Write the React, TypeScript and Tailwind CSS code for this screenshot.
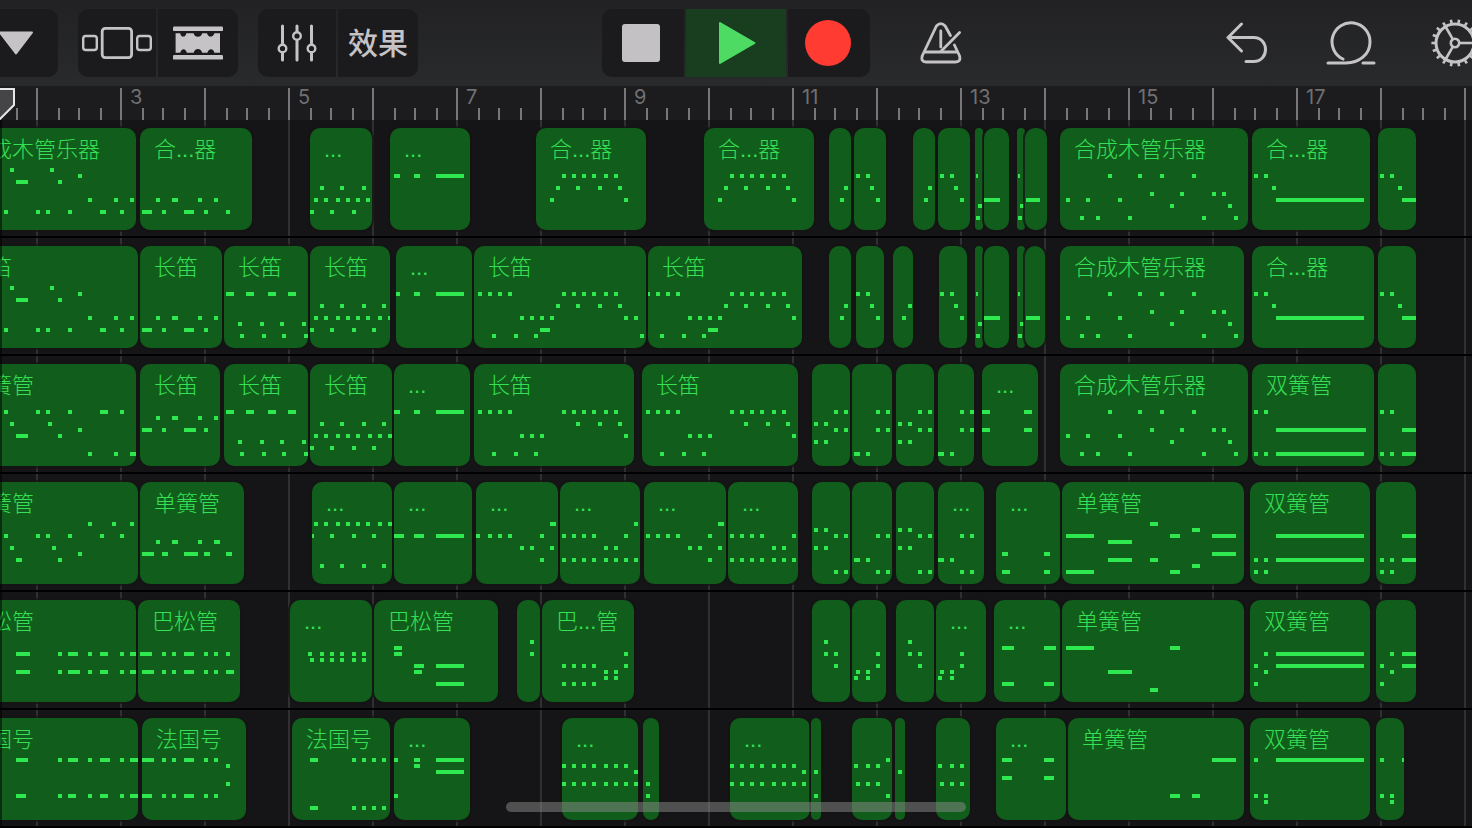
import React from "react";

type Clip = { start: number; end: number; label?: string; notes: string };

const clip = (start: number, end: number, notes: string, label?: string): Clip => ({ start, end, label, notes });

/* Notes are written as "level:x,x,..." groups; "x" may carry a width, as in 16x12. */
const OPENING = "0:10,50 1:78 2:16x12,58 5:88,114,130 7:4,36,46,68,100x6,120";
const SOLO =
  "1:1108,1138,1160,1192 4:1150,1180,1212,1222 5:1066,1086,1118 6:1170,1228 8:1080,1096,1128,1202,1234";
const BEATS = "1:226x8,246x8,268x8,288x8 6:238,260,280,302 8:240,262,282,304";

/* Bars beyond the end of the song keep their ticks but carry no number. */
const LAST_BAR = 18;

const lanes: { name: string; clips: Clip[] }[] = [
  {
    name: "合成木管乐器",
    clips: [
      clip(-46, 136, OPENING, "合成木管乐器"),
      clip(140, 252, "5:156,172x6,198,214 7:142x10,162,184x10,204,226", "合...器"),
      clip(310, 372, "3:320,340,362 5:314,324,336,346,356,366 7:310,330,352", "..."),
      clip(390, 470, "1:394x6,414x6,436x28", "..."),
      clip(536, 646, "1:562,572,582,592,604,614 3:556,576,598,618 5:550,624", "合...器"),
      clip(704, 814, "1:730,740,750,760,772,782 3:724,744,766,786 5:718,792", "合...器"),
      clip(829, 851, "3:844 5:840"),
      clip(854, 886, "1:856,866 3:870 5:876"),
      clip(913, 935, "3:928 5:924"),
      clip(938, 970, "1:940,950 3:954 5:960"),
      clip(975, 983, "1:976x2 6:978 8:976"),
      clip(984, 1009, "5:984x16"),
      clip(1017, 1025, "1:1018x2 6:1020 8:1018"),
      clip(1025, 1047, "5:1026x14"),
      clip(1060, 1248, SOLO, "合成木管乐器"),
      clip(1252, 1370, "1:1254,1264 3:1272 5:1276x88", "合...器"),
      clip(1378, 1416, "1:1380,1390 3:1398 5:1402x14"),
    ],
  },
  {
    name: "长笛",
    clips: [
      clip(-46, 138, OPENING, "长笛"),
      clip(140, 222, "5:156,172x6,198,214 7:142x10,162,184x10,204", "长笛"),
      clip(224, 308, BEATS, "长笛"),
      clip(310, 390, "3:320,340,362,382 5:314,324,336,346,356,366,378,388 7:310,330,352,372", "长笛"),
      clip(396, 472, "1:396,414x6,436x28", "..."),
      clip(
        474,
        646,
        "1:478,488,498,508,562,572,582,592,604,614 3:556,576,598,618 5:520,530,540,550,624,634 7:540x10 8:492,514,534,640",
        "长笛",
      ),
      clip(
        648,
        802,
        "1:648x2,656,666,676,730,740,750,760,772,782 3:724,744,766,786 5:688,698,708,718,792 7:708x10 8:660,682,702",
        "长笛",
      ),
      clip(829, 851, "3:844 5:840"),
      clip(856, 884, "1:856,866 3:870 5:876"),
      clip(893, 913, "3:908 5:902"),
      clip(939, 967, "1:940,950 3:954 5:960"),
      clip(975, 983, "1:976x2 6:978 8:976"),
      clip(984, 1009, "5:984x16"),
      clip(1017, 1025, "1:1018x2 6:1020 8:1018"),
      clip(1025, 1045, "5:1026x14"),
      clip(1060, 1244, SOLO, "合成木管乐器"),
      clip(1252, 1374, "1:1254,1264 3:1272 5:1276x88", "合...器"),
      clip(1378, 1416, "1:1380,1390 3:1398 5:1402x14"),
    ],
  },
  {
    name: "双簧管",
    clips: [
      clip(-46, 136, "1:4,36,46,68,100x8,120 3:10,48 4:78 5:16x12,58 8:88,114,130x6", "双簧管"),
      clip(140, 220, "2:156,172x6,198,214 4:142x10,162,184x12,204", "长笛"),
      clip(224, 308, BEATS, "长笛"),
      clip(310, 392, "3:320,340,362,382 5:314,324,336,346,356,368,378,388 7:310,330,352,372", "长笛"),
      clip(394, 470, "1:394x6,414x6,436x28", "..."),
      clip(
        474,
        634,
        "1:478,488,498,508,562,572,582,592,604,614 3:576,598,618 5:520,530,540,624 8:492,514,534",
        "长笛",
      ),
      clip(
        642,
        798,
        "1:646,656,666,676,730,740,750,760,772,782 3:744,766,786 5:688,698,708,792 8:660,682,702",
        "长笛",
      ),
      clip(812, 850, "1:834,844 3:814,824 4:834,844 6:814,824"),
      clip(852, 892, "1:876,886 4:876,886 8:854x6,866"),
      clip(896, 934, "1:918,928 3:898,908 4:918,928 6:898,908"),
      clip(938, 974, "1:960,970 4:960,970 8:938x6,950"),
      clip(982, 1038, "1:982x8,1024x8 4:982x8,1024x8", "..."),
      clip(1060, 1248, SOLO, "合成木管乐器"),
      clip(1252, 1374, "1:1254,1264 4:1276x90 8:1254,1264,1276x88", "双簧管"),
      clip(1378, 1416, "1:1380,1390 4:1402x14 8:1380,1390,1402x14"),
    ],
  },
  {
    name: "单簧管",
    clips: [
      clip(-46, 138, "0:88,112,130 2:4,36,46,68,100,120 4:10,52 5:78 6:16x6,58", "单簧管"),
      clip(140, 244, "3:156,172x6,198,214x6 5:142x12,162x6,184x14,204x6,226x6", "单簧管"),
      clip(312, 392, "0:314,324,336,346,356,366,378,388 2:312x2,330,352,372 7:320,340,362,382", "..."),
      clip(394, 472, "2:394x10,414x10,436x28", "..."),
      clip(476, 558, "0:550x6 2:476,488,498,508,540 4:520,530,550 6:540", "..."),
      clip(560, 640, "0:634 2:562,572,582,592,624 4:604,614 6:562,572,582,592,604,614,624,634", "..."),
      clip(644, 726, "0:718x6 2:646,656,666,676,708 4:688,698,718 6:708", "..."),
      clip(728, 798, "2:730,740,750,760,792 4:772,782 6:730,740,750,760,772,782,792", "..."),
      clip(812, 850, "1:814,824 2:834,844 4:814,824 8:834,844"),
      clip(852, 892, "2:876,886 6:854x6,866 8:876,886"),
      clip(896, 934, "1:898,908 2:918,928 4:898,908 8:918,928"),
      clip(938, 984, "2:960,970 6:938x6,950 8:960,970", "..."),
      clip(996, 1060, "5:1002x6,1044x6 8:1002x8,1044x6", "..."),
      clip(
        1062,
        1244,
        "0:1150x8 1:1192x8 2:1066x28,1170x10,1212x24 3:1108x24 5:1212x24 6:1108x24,1150x8 7:1192x8 8:1066x28,1170x10",
        "单簧管",
      ),
      clip(1250, 1370, "2:1276x88 6:1254,1264,1276x88 8:1254,1264", "双簧管"),
      clip(1376, 1416, "2:1402x14 6:1380,1390,1402x14 8:1380,1390"),
    ],
  },
  {
    name: "巴松管",
    clips: [
      clip(-46, 136, "2:16x14,58,68x10,88,100x8,120,130x6 5:16x14,58,68x12,88,100x8,120,130x6", "巴松管"),
      clip(138, 240, "2:140x12,162,172,184x10,204,214,226 5:142x12,162,172,184x10,204,214,226x8", "巴松管"),
      clip(290, 372, "2:308,320,330,340,352,362 3:310,320,330,340,352,362", "..."),
      clip(374, 498, "1:394x8 2:394x8 4:414x10,436x28 5:414x8 7:436x28", "巴松管"),
      clip(517, 540, "0:530 2:530"),
      clip(542, 634, "2:624 4:562,572,582,592,624 5:604,614 6:604,614 7:562,572,582,592", "巴...管"),
      clip(812, 850, "0:824 2:824,834 4:834"),
      clip(852, 886, "2:876 4:876 5:856,866 6:854,866"),
      clip(896, 934, "0:908 2:908,918 4:918"),
      clip(936, 986, "2:960 4:960 5:940,950 6:938,950", "..."),
      clip(994, 1060, "1:1002x12,1044x12 7:1002x12,1044x10", "..."),
      clip(1062, 1244, "1:1066x28,1170x10 5:1108x24 8:1150x8", "单簧管"),
      clip(1250, 1370, "2:1264,1276x88 4:1254,1276x88 5:1264 7:1254", "双簧管"),
      clip(1376, 1416, "2:1390,1402x14 4:1380,1402x14 5:1390 7:1380"),
    ],
  },
  {
    name: "法国号",
    clips: [
      clip(-46, 138, "0:16x12,58,68x10,88,100x10,120,130x8 6:16x10,58,68x8,88,100x8,120,130x8", "法国号"),
      clip(142, 246, "0:142x12,162,172,184x10,204,214 1:226 4:226 6:142x10,162,172,184x10,204,214", "法国号"),
      clip(292, 390, "0:310x8,352,362,372,382 8:310x8,352,362,372,382", "法国号"),
      clip(394, 470, "0:394,414x6,436x28 1:414x6 2:436x28 6:394", "..."),
      clip(562, 638, "1:562,572,582,592,604,614,624 2:634 4:562,572,582,592,604,614,624,634", "..."),
      clip(643, 659, "4:646 6:646"),
      clip(730, 810, "1:730,740,750,760,772,782,792 2:802 4:730,740,750,760,772,782,792,802", "..."),
      clip(811, 821, "2:814 6:814"),
      clip(852, 892, "0:886 1:854,866,876 4:856,866,876 6:886"),
      clip(895, 905, "2:898"),
      clip(936, 970, "1:938,950,960 4:940,950,960"),
      clip(996, 1066, "0:1002x10,1044x10 3:1002x10,1044x10", "..."),
      clip(1068, 1244, "0:1212x24 6:1170x10,1192x8", "单簧管"),
      clip(1250, 1370, "0:1254,1276x88 6:1254,1264 7:1264", "双簧管"),
      clip(1376, 1404, "0:1380,1402x2 6:1380,1390 7:1390"),
    ],
  },
];

function parseNotes(notes: string) {
  return notes.split(" ").flatMap((group) => {
    const [level, list] = group.split(":");
    return list.split(",").map((item) => {
      const [x, width] = item.split("x").map(Number);
      return { x, y: 40 + Number(level) * 6, width: width || 4 };
    });
  });
}

function Region({ start, end, label, notes }: Clip) {
  const width = end - start;
  return (
    <div
      className="absolute top-2 h-[102px] overflow-hidden rounded-[10px] bg-[#115d1c] shadow-[0_0_0_2px_rgba(20,20,22,0.75)]"
      style={{ left: start, width }}
    >
      <svg className="absolute inset-0 size-full" fill="#2fe850" shapeRendering="crispEdges" aria-hidden="true">
        {parseNotes(notes).map((note, i) => (
          <rect key={i} x={note.x - start} y={note.y} width={note.width} height={4} />
        ))}
      </svg>
      {label && (
        <span className="relative block whitespace-nowrap pl-[14px] text-[22px] leading-[44px] font-light text-[#35e055]">
          {label}
        </span>
      )}
    </div>
  );
}

function Ruler() {
  return (
    <div className="relative h-[34px] overflow-hidden bg-[#1c1c1e]">
      <div className="-ml-12 flex h-full">
        {Array.from({ length: 40 }, (_, i) => i + 1).map((bar) => (
          <div key={bar} className="relative flex w-[84px] shrink-0 items-end">
            <i className="h-8 w-[2px] bg-[#77777a]" />
            <i className="ml-5 h-3 w-[2px] bg-[#77777a]" />
            <i className="ml-[18px] h-3 w-[2px] bg-[#77777a]" />
            <i className="ml-5 h-3 w-[2px] bg-[#77777a]" />
            {bar % 2 === 1 && bar > 1 && bar <= LAST_BAR && (
              <span className="absolute top-0 left-[10px] font-['Inter','Liberation_Sans',sans-serif] text-[20px] leading-[22px] text-[#707073]">
                {bar}
              </span>
            )}
          </div>
        ))}
      </div>
      <svg className="absolute top-[2px] left-0" width="16" height="32" viewBox="0 0 16 32" aria-hidden="true">
        <path d="M-4 1H14V17L0 31H-4Z" fill="#454548" stroke="#e6e6e8" strokeWidth="2" />
      </svg>
    </div>
  );
}

const stroke = { fill: "none", stroke: "currentColor", strokeLinecap: "round", strokeLinejoin: "round" } as const;

function DropIcon() {
  return (
    <svg width="36" height="26" viewBox="0 0 36 26" fill="currentColor" stroke="currentColor" strokeWidth="2" strokeLinejoin="round">
      <path d="M2 2.5H34L18 23.5Z" />
    </svg>
  );
}

function BrowserIcon() {
  return (
    <svg width="70" height="32" viewBox="0 0 70 32" {...stroke}>
      <rect x="1.2" y="9" width="13.6" height="14" rx="2.6" strokeWidth="2.4" />
      <rect x="20.2" y="1.4" width="29.4" height="29.2" rx="3" strokeWidth="2.8" />
      <rect x="55.2" y="9" width="13.6" height="14" rx="2.6" strokeWidth="2.4" />
    </svg>
  );
}

function TracksIcon() {
  return (
    <svg width="50" height="34" viewBox="0 0 50 34" fill="currentColor">
      <rect y="0.5" width="50" height="4.6" rx="1.2" />
      <rect y="29" width="50" height="4.6" rx="1.2" />
      <path d="M2.6 7.2H7.2Q7.8 10.6 10.2 10.6Q12.6 10.6 13.4 7.2H20.6Q21.6 10.8 24.9 10.8Q28.2 10.8 29.2 7.2H34Q35 10.6 37.6 10.6Q40.2 10.6 41.4 7.2H47V26.8H41.4Q40.6 23.2 38 23.2Q35.4 23.2 34.4 26.8H29.2Q28.2 23 24.9 23Q21.6 23 20.6 26.8H13.8Q13 23.2 10.6 23.2Q8.2 23.2 7.2 26.8H2.6Z" />
    </svg>
  );
}

function MixerIcon() {
  return (
    <svg width="40" height="38" viewBox="0 0 40 38" {...stroke} strokeWidth="3">
      <path d="M5.5 2V19M5.5 29V36M20 2V7M20 17V36M34.5 2V19M34.5 29V36" />
      <circle cx="5.5" cy="24.5" r="3.8" strokeWidth="2.4" />
      <circle cx="20" cy="12" r="3.8" strokeWidth="2.4" />
      <circle cx="34.5" cy="24.5" r="3.8" strokeWidth="2.4" />
    </svg>
  );
}

function MetronomeIcon() {
  return (
    <svg width="42" height="42" viewBox="0 0 42 42" {...stroke} strokeWidth="2.8">
      <path d="M30.4 13.5L25.2 4Q20.8 -0.8 16.4 4L2.4 33.5Q0.4 39.8 6 40H35.6Q41.4 39.8 39.4 33.5L34.4 23" />
      <path d="M5 30H36.5M20.8 9V25" />
      <path d="M39.6 10.4L20.8 29.4" />
    </svg>
  );
}

function UndoIcon() {
  return (
    <svg width="42" height="42" viewBox="0 0 42 42" {...stroke} strokeWidth="3">
      <path d="M15.5 2L2 15.5L15.5 29M2 15.5H27.5C43.5 15.5 43.5 39.5 27.5 39.5H20" />
    </svg>
  );
}

function LoopIcon() {
  return (
    <svg width="50" height="44" viewBox="0 0 50 44" {...stroke} strokeWidth="3">
      <path d="M2 42H20C33 42 44 33.5 44 21A19 19 0 1 0 17 38" />
      <path d="M37 42H48" />
    </svg>
  );
}

function GearIcon() {
  const teeth = Array.from({ length: 18 }, (_, i) => i * 20);
  return (
    <svg width="50" height="50" viewBox="-25 -25 50 50" {...stroke} strokeLinecap="butt" strokeWidth="2.6">
      <circle r="19" strokeWidth="3" />
      <circle r="4.2" />
      {[0, 120, 240].map((angle) => (
        <path key={angle} d="M4.5 0H18.5" transform={`rotate(${angle})`} />
      ))}
      {teeth.map((angle) => (
        <path key={angle} d="M20 0H23.6" transform={`rotate(${angle})`} />
      ))}
    </svg>
  );
}

const segment = "flex h-full items-center justify-center bg-[#1b1b1d]";
const bare = "flex h-[68px] items-center justify-center";

function Toolbar() {
  return (
    <header className="grid h-[86px] grid-cols-[1fr_auto_1fr] items-center bg-linear-to-b from-[#222224] to-[#292a2c] text-[#c5c3c6]">
      <div className="flex h-[68px] gap-5">
        <button aria-label="乐器" className={`${segment} -ml-[26px] w-[84px] rounded-[10px]`}>
          <DropIcon />
        </button>
        <div className="flex gap-[2px] overflow-hidden rounded-[10px]">
          <button aria-label="浏览器" className={`${segment} w-[78px]`}>
            <BrowserIcon />
          </button>
          <button aria-label="轨道" className={`${segment} w-20`}>
            <TracksIcon />
          </button>
        </div>
        <div className="flex gap-[2px] overflow-hidden rounded-[10px]">
          <button aria-label="混音" className={`${segment} w-[78px]`}>
            <MixerIcon />
          </button>
          <button className={`${segment} w-20 text-[30px] font-medium`}>效果</button>
        </div>
      </div>

      <div className="flex h-[68px] gap-[2px] overflow-hidden rounded-[10px]">
        <button aria-label="停止" className={`${segment} w-[82px] pr-1`}>
          <span className="size-[38px] rounded-[3px] bg-[#c3c1c4]" />
        </button>
        <button aria-label="播放" className="flex h-full w-[100px] items-center justify-center bg-[#183d1f] pl-[2px]">
          <svg width="38" height="44" viewBox="0 0 38 44" fill="#4ddb64" stroke="#4ddb64" strokeWidth="2" strokeLinejoin="round">
            <path d="M2 2V42L36.5 22Z" />
          </svg>
        </button>
        <button aria-label="录音" className={`${segment} w-[82px] pr-[2px]`}>
          <span className="size-[46px] rounded-full bg-[#ff3b32]" />
        </button>
      </div>

      <div className="-mr-[35px] flex justify-between">
        <button aria-label="节拍器" className={`${bare} ml-[41px] w-[60px]`}>
          <MetronomeIcon />
        </button>
        <div className="flex">
          <button aria-label="撤销" className={`${bare} w-[104px]`}>
            <UndoIcon />
          </button>
          <button aria-label="循环" className={`${bare} w-[104px]`}>
            <LoopIcon />
          </button>
          <button aria-label="设置" className={`${bare} w-[104px]`}>
            <GearIcon />
          </button>
        </div>
      </div>
    </header>
  );
}

export default function App() {
  return (
    <div className="min-h-screen overflow-hidden bg-[#151517] font-['Liberation_Sans','Noto_Sans_CJK_SC',sans-serif]">
      <Toolbar />
      <Ruler />
      <main className="relative bg-[linear-gradient(to_right,#303033_2px,transparent_2px)] bg-size-[84px_100%] bg-position-[36px_0]">
        {lanes.map((lane) => (
          <section
            key={lane.name}
            aria-label={lane.name}
            className="relative h-[118px] overflow-hidden border-b-2 border-black"
          >
            {lane.clips.map((c) => (
              <Region key={c.start} {...c} />
            ))}
          </section>
        ))}
        <div className="absolute inset-y-0 left-0 w-[2px] bg-black/50" />
      </main>
      <div className="fixed bottom-4 left-1/2 h-[10px] w-[460px] -translate-x-1/2 rounded-full bg-[#8c8c8c]/50" />
    </div>
  );
}
